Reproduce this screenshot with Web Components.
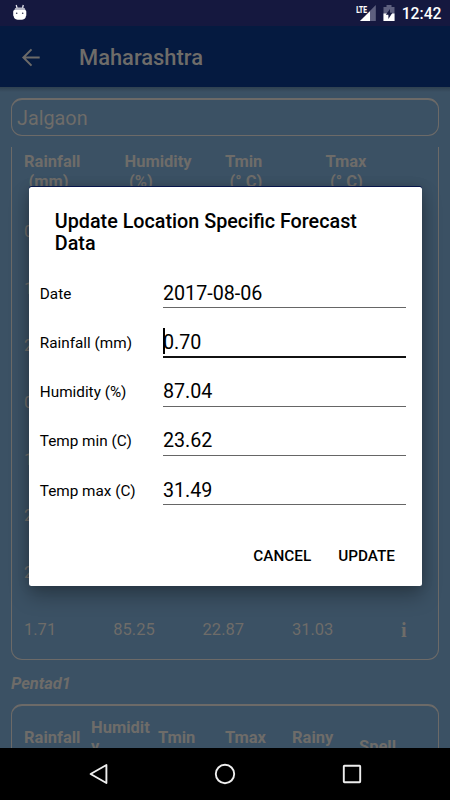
<!DOCTYPE html>
<html lang="en">
  <head>
    <meta charset="UTF-8" />
    <title>Maharashtra</title>
    <style>
      body {
        margin: 0;
        width: 450px;
        height: 800px;
        overflow: hidden;
        font-family: Roboto, "Liberation Sans", sans-serif;
      }
    </style>
  </head>
  <body>
    <phone-screen>
      <status-bar slot="top" time="12:42"></status-bar>
      <app-bar slot="top">Maharashtra</app-bar>

      <location-field>Jalgaon</location-field>
      <forecast-card></forecast-card>
      <section-title>Pentad1</section-title>
      <pentad-card></pentad-card>

      <forecast-dialog slot="dialog" heading="Update Location Specific Forecast Data">
        <form-row label="Date">2017-08-06</form-row>
        <form-row label="Rainfall (mm)" focused>0.70</form-row>
        <form-row label="Humidity (%)">87.04</form-row>
        <form-row label="Temp min (C)">23.62</form-row>
        <form-row label="Temp max (C)">31.49</form-row>
        <dialog-button slot="actions">CANCEL</dialog-button>
        <dialog-button slot="actions">UPDATE</dialog-button>
      </forecast-dialog>

      <nav-bar slot="bottom"></nav-bar>
    </phone-screen>

    <script>
      // define an element whose shadow root is filled from a render function
      const define = (name, render) => {
        window.customElements.define(
          name,
          class extends HTMLElement {
            constructor() {
              super();
              this.attachShadow({ mode: "open" });
            }

            connectedCallback() {
              this.shadowRoot.innerHTML = render(this);
            }
          }
        );
      };

      define("phone-screen", () => `
        <style>
          :host {
            position: relative;
            display: flex;
            flex-direction: column;
            width: 450px;
            height: 800px;
            background: #3b5164;
            color: #6e6c69;
            --line: #6c6a68;
          }
          main {
            flex: 1;
            min-height: 0;
            overflow: hidden;
            padding: 11px 11px 0;
            box-sizing: border-box;
            background: linear-gradient(#2f4050, #3b5164 5px);
          }
          .overlay {
            position: absolute;
            left: 28.5px;
            top: 187px;
          }
        </style>
        <slot name="top"></slot>
        <main><slot></slot></main>
        <slot name="bottom"></slot>
        <div class="overlay"><slot name="dialog"></slot></div>
      `);

      define("status-bar", (el) => `
        <style>
          :host {
            display: flex;
            align-items: center;
            height: 26px;
            padding: 0 8.5px 0 12px;
            background: #15183f;
            color: #fff;
            font-size: 15.7px;
            font-weight: 500;
          }
          .space { flex: 1; }
          .signal { margin-right: 7px; }
          .battery { margin-right: 7px; }
          .time { line-height: 26px; padding-top: 1px; }
        </style>
        <svg width="16" height="20" viewBox="0 0 16 20">
          <path d="M4.2 2 L5.2 5.5 M11.3 2 L10.4 5.5" stroke="#e4e4ee" stroke-width="1.3" fill="none"/>
          <path d="M2.2 7.5 Q2.5 4.8 5 4.6 H10.8 Q13.4 4.8 13.6 7.5Z" fill="#b9bac8"/>
          <path d="M1.2 8.5 Q1.2 7 2.5 6.9 H13 Q14.3 7 14.3 8.5 V12.5 Q13.8 13 13.6 14.5 Q12.8 16.8 7.8 16.8 Q2.8 16.8 2 14.5 Q1.8 13 1.2 12.5Z" fill="#fff"/>
          <circle cx="4.7" cy="10.3" r="0.8" fill="#333650"/>
          <circle cx="10.7" cy="10.3" r="0.8" fill="#333650"/>
        </svg>
        <span class="space"></span>
        <svg class="signal" width="20" height="20" viewBox="0 0 20 20">
          <path d="M19.8 2 V18 H4Z" fill="#5e607f"/>
          <path d="M14 8.2 V18 H4Z" fill="#fff"/>
          <text x="0.3" y="9.7" font-size="9.6" font-weight="700" textLength="10.6" lengthAdjust="spacingAndGlyphs" fill="#fff" stroke="#fff" stroke-width="0.2" font-family="Roboto">LTE</text>
        </svg>
        <svg class="battery" width="12" height="18" viewBox="0 0 12 18">
          <path d="M3.5 1 H8.5 V3 H11.5 V17 H0.5 V3 H3.5Z" fill="#5e607f"/>
          <rect x="0.5" y="9.5" width="11" height="7.5" fill="#fff"/>
          <path d="M7 5 L2.8 10.8 H5.4 V15 L9.4 8.8 H7Z" fill="#15183f"/>
        </svg>
        <span class="time">${el.getAttribute("time")}</span>
      `);

      define("app-bar", () => `
        <style>
          :host {
            display: flex;
            align-items: center;
            height: 61px;
            padding: 2px 0 0 20px;
            box-sizing: border-box;
            background: #051a40;
            font-size: 21.9px;
            font-weight: 500;
          }
          svg { margin-right: 37px; }
        </style>
        <svg width="22" height="20" viewBox="0 0 22 20">
          <path d="M19.7 9.5 H3.4 M11.5 1.4 L3.4 9.5 L11.5 17.6" fill="none" stroke="#6c6a68" stroke-width="2"/>
        </svg>
        <span><slot></slot></span>
      `);

      define("location-field", () => `
        <style>
          :host {
            display: block;
            height: 38px;
            width: 428px;
            box-sizing: border-box;
            border: solid var(--line);
            border-width: 2px 1px 1px;
            border-radius: 11px;
            padding-left: 5px;
            font-size: 19.8px;
            line-height: 37px;
          }
        </style>
        <slot></slot>
      `);

      define("forecast-card", () => {
        const heads = [["Rainfall", "(mm)"], ["Humidity", "(%)"], ["Tmin", "(° C)"], ["Tmax", "(° C)"]];
        const covered = ["0", "1", "2", "0", "1", "2", "2"];
        return `
        <style>
          :host {
            display: block;
            width: 428px;
            height: 513px;
            margin-top: 11px;
            padding: 5px 12px 0;
            box-sizing: border-box;
            border: 1px solid var(--line);
            border-top: 0;
            border-radius: 0 0 11px 11px;
          }
          .head {
            display: grid;
            grid-template-columns: repeat(4, 100.5px);
            height: 52px;
            font-size: 16.5px;
            font-weight: 700;
            line-height: 19.5px;
          }
          .head i { display: block; font-style: normal; padding-left: 4.5px; }
          .row {
            display: grid;
            grid-template-columns: 89.3px 89.3px 89.3px 109px 20px;
            height: 56.9px;
            line-height: 56.9px;
            font-size: 16.5px;
          }
          .info { font: 700 20px/56px "Liberation Serif", serif; }
        </style>
        <div class="head">${heads.map(([name, unit]) => `<div>${name}<i>${unit}</i></div>`).join("")}</div>
        ${covered.map((digit) => `<div class="row">${digit}</div>`).join("")}
        <div class="row">
          <span>1.71</span><span>85.25</span><span>22.87</span><span>31.03</span><span class="info">i</span>
        </div>
      `;
      });

      define("section-title", () => `
        <style>
          :host {
            display: block;
            height: 44px;
            line-height: 47.5px;
            font-size: 16.5px;
            font-weight: 700;
            font-style: italic;
          }
        </style>
        <slot></slot>
      `);

      define("pentad-card", () => `
        <style>
          :host {
            display: grid;
            grid-template-columns: repeat(6, 67px);
            width: 428px;
            height: 90px;
            box-sizing: border-box;
            border: 1px solid var(--line);
            border-top-width: 2px;
            border-radius: 11px 11px 0 0;
            padding: 12px 0 0 12px;
            font-size: 16.5px;
            font-weight: 700;
            line-height: 19px;
          }
          .mid { padding-top: 10px; }
          .low { padding-top: 19px; }
        </style>
        <div class="mid">Rainfall</div>
        <div>Humidit<br>y</div>
        <div class="mid">Tmin</div>
        <div class="mid">Tmax</div>
        <div class="mid">Rainy</div>
        <div class="low">Spell</div>
      `);

      define("forecast-dialog", (el) => `
        <style>
          :host {
            display: block;
            width: 393px;
            height: 399px;
            box-sizing: border-box;
            border-radius: 2.5px;
            background: #fff;
            color: #000;
            box-shadow: 0 -1px 0 #06154a, 0 10px 20px rgba(0, 0, 0, 0.28), 0 0 12px rgba(0, 0, 0, 0.16);
          }
          h2 {
            margin: 0;
            padding: 24px 40px 0 26.3px;
            height: 58.6px;
            font-size: 19.75px;
            font-weight: 500;
            line-height: 22px;
          }
          .fields { padding: 0 15.5px 0 11.3px; }
          .actions {
            display: flex;
            justify-content: flex-end;
            gap: 27px;
            padding: 6px 26.5px 0 0;
          }
        </style>
        <h2>${el.getAttribute("heading")}</h2>
        <div class="fields"><slot></slot></div>
        <div class="actions"><slot name="actions"></slot></div>
      `);

      define("form-row", (el) => `
        <style>
          :host {
            display: grid;
            grid-template-columns: 123.2px 1fr;
            height: 49.3px;
            font-size: 15.3px;
          }
          label { padding-top: 14px; line-height: 20px; }
          .input {
            position: relative;
            height: 38.4px;
            box-sizing: border-box;
            border-bottom: 1px solid #666;
            font-size: 19.7px;
            line-height: 47px;
          }
          :host([focused]) .input { height: 39.4px; border-bottom: 2px solid #111; }
          /* text cursor */
          :host([focused]) .input::before {
            content: "";
            position: absolute;
            left: 0;
            top: 9px;
            width: 2px;
            height: 26px;
            background: #000;
          }
        </style>
        <label>${el.getAttribute("label")}</label>
        <div class="input"><slot></slot></div>
      `);

      define("dialog-button", () => `
        <style>
          :host {
            display: block;
            font-size: 15.3px;
            font-weight: 500;
            line-height: 68px;
          }
        </style>
        <slot></slot>
      `);

      define("nav-bar", () => `
        <style>
          :host {
            display: grid;
            grid-template-columns: repeat(3, 126.5px);
            justify-content: center;
            place-items: center;
            height: 52.3px;
            background: #000;
          }
        </style>
        <svg width="22" height="22" viewBox="0 0 22 22">
          <path d="M18.4 2 V20 L2.6 11Z" fill="none" stroke="#eee" stroke-width="1.9" stroke-linejoin="round"/>
        </svg>
        <svg width="22" height="22" viewBox="0 0 22 22">
          <circle cx="11" cy="11" r="9.2" fill="none" stroke="#eee" stroke-width="1.9"/>
        </svg>
        <svg width="22" height="22" viewBox="0 0 22 22">
          <rect x="2.8" y="2.8" width="16.4" height="16.4" rx="0.6" fill="none" stroke="#eee" stroke-width="1.9"/>
        </svg>
      `);
    </script>
  </body>
</html>
